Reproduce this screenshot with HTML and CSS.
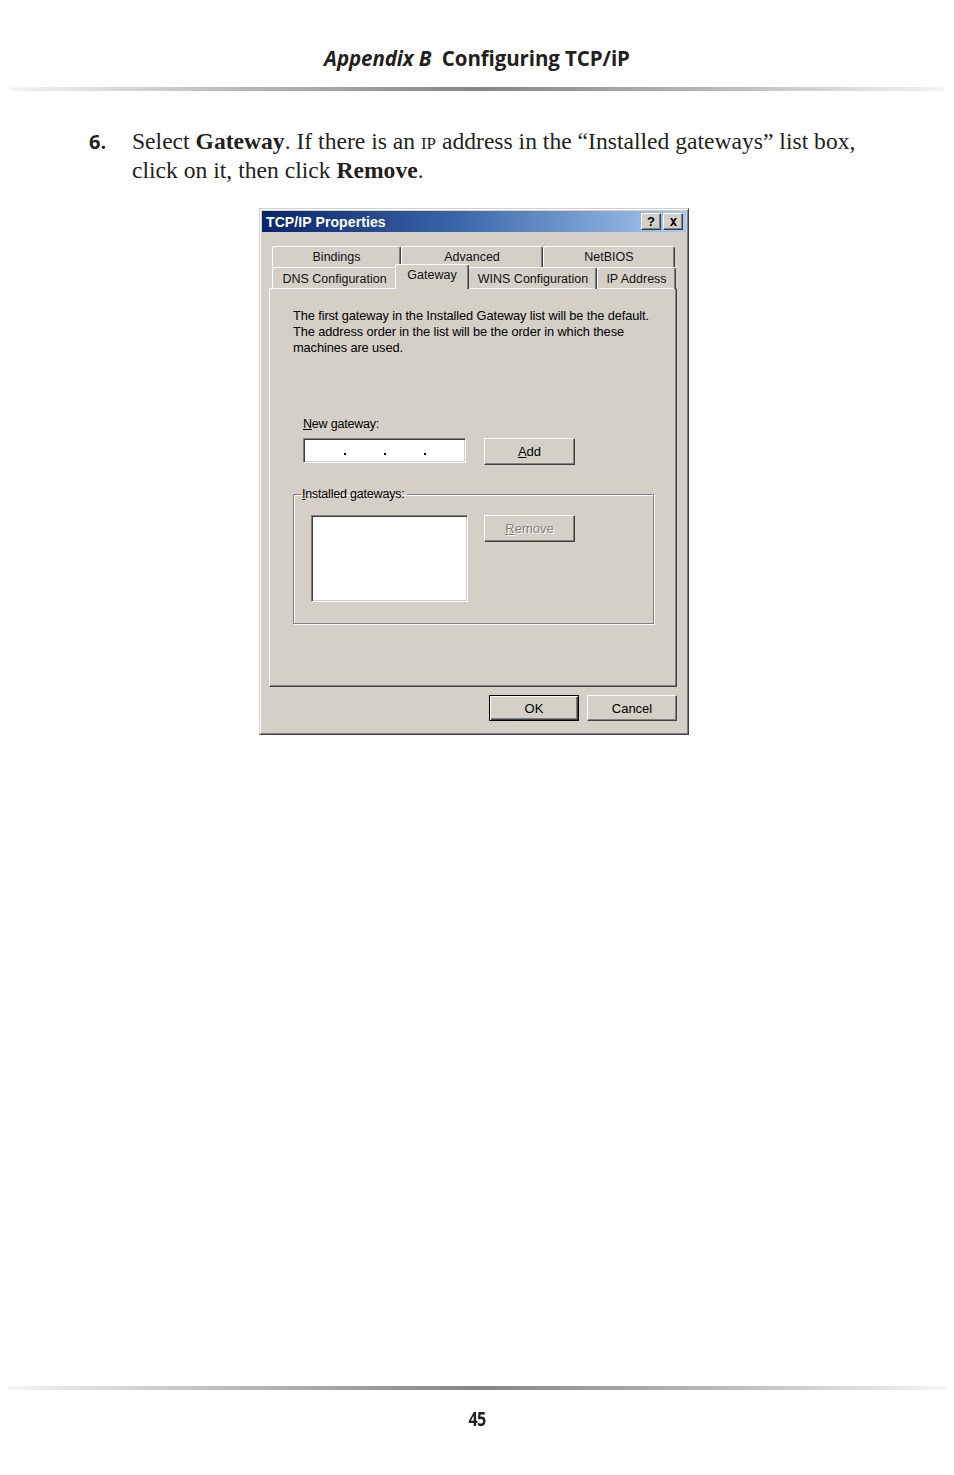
FILE: index.html
```html
<!DOCTYPE html>
<html>
<head>
<meta charset="utf-8">
<link rel="stylesheet" href="styles.css">
</head>
<body>
<div class="page">
  <header class="running-head">
    <div class="head-text"><em>Appendix B</em>&nbsp; Configuring TCP/iP</div>
    <div class="rule"></div>
  </header>

  <div class="step">
    <div class="step-num">6.</div>
    <p class="step-text">Select <b>Gateway</b>. If there is an <span class="sc">ip</span> address in the “Installed gateways” list box, click on it, then click <b>Remove</b>.</p>
  </div>

  <div class="dialog">
    <div class="titlebar">
      <span class="title">TCP/IP Properties</span>
      <div class="tb-buttons">
        <span class="tb-btn">?</span>
        <span class="tb-btn tb-close"><svg width="9" height="8" viewBox="0 0 9 8"><path d="M1 0h2l1.5 2.2L6 0h2L5.5 4 8 8H6L4.5 5.8 3 8H1l2.5-4z" fill="#000"/></svg></span>
      </div>
    </div>
    <div class="dlg-body">
      <div class="tabs">
        <div class="tab-row back">
          <div class="tab t-bind">Bindings</div>
          <div class="tab t-adv">Advanced</div>
          <div class="tab t-net">NetBIOS</div>
        </div>
        <div class="tab-row front">
          <div class="tab t-dns">DNS Configuration</div>
          <div class="tab t-gw selected">Gateway</div>
          <div class="tab t-wins">WINS Configuration</div>
          <div class="tab t-ip">IP Address</div>
        </div>
      </div>
      <div class="panel">
        <p class="desc">The first gateway in the Installed Gateway list will be the default.<br>The address order in the list will be the order in which these<br>machines are used.</p>
        <div class="new-gw">
          <div class="label"><u>N</u>ew gateway:</div>
          <div class="row">
            <div class="ipfield"><span class="dot"></span><span class="dot"></span><span class="dot"></span></div>
            <div class="btn btn-add"><u>A</u>dd</div>
          </div>
        </div>
        <fieldset class="group">
          <legend><u>I</u>nstalled gateways:</legend>
          <div class="group-row">
            <div class="listbox"></div>
            <div class="btn btn-remove disabled"><u>R</u>emove</div>
          </div>
        </fieldset>
      </div>
      <div class="dlg-buttons">
        <div class="btn btn-ok default">OK</div>
        <div class="btn btn-cancel">Cancel</div>
      </div>
    </div>
  </div>

  <footer class="running-foot">
    <div class="rule foot-rule"></div>
    <div class="page-num">45</div>
  </footer>
</div>
</body>
</html>
```
FILE: styles.css
```css
html, body { margin: 0; padding: 0; background: #fff; }
.page {
  width: 954px;
  min-height: 1475px;
  display: flex;
  flex-direction: column;
  color: #231f20;
}
.running-head { padding-top: 45px; }
.head-text {
  text-align: center;
  font-family: "Open Sans", "DejaVu Sans", sans-serif;
  font-weight: 700;
  font-size: 20.5px;
  line-height: 26px;
  letter-spacing: -0.1px;
}
.head-text em { font-style: italic; }
.rule {
  height: 4px;
  margin: 16px 10px 0;
  background: linear-gradient(to right, #f4f4f4 0%, #b8b8b8 25%, #858585 50%, #b8b8b8 75%, #f4f4f4 100%);
}

.step {
  display: flex;
  margin: 36px 0 0 89px;
}
.step-num {
  width: 43px;
  font-family: "Open Sans", "DejaVu Sans", sans-serif;
  font-weight: 700;
  font-size: 20px;
  line-height: 29px;
}
.step-text {
  margin: 0;
  width: 732px;
  font-family: "Liberation Serif", "DejaVu Serif", serif;
  font-size: 23.6px;
  line-height: 29px;
  color: #231f20;
}
.sc { font-variant: small-caps; }

/* Dialog */
.dialog {
  margin: 23px 0 0 259px;
  width: 430px;
  height: 527px;
  box-sizing: border-box;
  background: #d4d0c8;
  border: 1px solid;
  border-color: #d4d0c8 #404040 #404040 #d4d0c8;
  box-shadow: inset 1px 1px 0 #fff, inset -1px -1px 0 #808080;
  padding: 2px;
  font-family: "Liberation Sans", Arial, sans-serif;
  font-size: 12px;
  color: #000;
}
.titlebar {
  height: 21px;
  display: flex;
  align-items: center;
  justify-content: space-between;
  background: linear-gradient(to right, #0a246a 0%, #3a64a8 45%, #a6caf0 100%);
  padding: 0 3px 0 4px;
}
.title {
  color: #fff;
  font-weight: 700;
  font-size: 14px;
  letter-spacing: 0.1px;
}
.tb-buttons { display: flex; gap: 2px; }
.tb-btn {
  width: 20px;
  height: 17px;
  box-sizing: border-box;
  background: #d4d0c8;
  border: 1px solid;
  border-color: #fff #404040 #404040 #fff;
  box-shadow: inset -1px -1px 0 #808080;
  display: flex;
  align-items: center;
  justify-content: center;
  font-weight: 700;
  font-size: 13px;
  line-height: 1;
}
.dlg-body { padding: 0 9px 0 7px; }

.tabs { margin: 14px 0 0 3px; position: relative; z-index: 1; }
.tab-row { display: flex; height: 21px; }
.tab-row.front { height: 22px; }
.tab {
  box-sizing: border-box;
  height: 100%;
  border-top: 1px solid #fff;
  border-left: 1px solid #fff;
  border-right: 1px solid #404040;
  border-top-left-radius: 3px;
  border-top-right-radius: 3px;
  box-shadow: inset -1px 0 0 #808080;
  text-align: center;
  padding-top: 3px;
  white-space: nowrap;
  font-size: 12.5px;
  color: #111;
}
.tab-row.front .tab { padding-top: 4px; }
.t-bind { width: 129px; }
.t-adv { width: 142px; }
.t-net { width: 132px; }
.t-dns { width: 125px; }
.t-gw { width: 70px; }
.t-wins { width: 130px; }
.t-ip { width: 79px; }
.tab-row.front .tab.selected {
  height: 25px;
  margin: -3px -2px 0;
  width: 74px;
  background: #d4d0c8;
  padding-top: 3px;
  position: relative;
  z-index: 2;
}
.tab-row.front .t-wins { padding-left: 2px; }

.panel {
  margin-top: -1px;
  height: 399px;
  box-sizing: border-box;
  border: 1px solid;
  border-color: #fff #404040 #404040 #fff;
  box-shadow: inset -1px -1px 0 #808080;
  position: relative;
}
.desc {
  margin: 0;
  padding: 19px 0 0 23px;
  font-size: 12.8px;
  line-height: 16px;
  letter-spacing: -0.1px;
}
.new-gw { margin: 60px 0 0 33px; }
.label { line-height: 16px; font-size: 12.5px; letter-spacing: -0.2px; }
.row { display: flex; align-items: flex-start; margin-top: 6px; gap: 18px; }
.ipfield {
  width: 163px;
  height: 25px;
  box-sizing: border-box;
  background: #fff;
  border: 1px solid;
  border-color: #808080 #fff #fff #808080;
  box-shadow: inset 1px 1px 0 #404040, inset -1px -1px 0 #d4d0c8;
  display: flex;
  justify-content: center;
  align-items: flex-end;
  gap: 38px;
  padding: 0 0 7px 0;
}
.dot { width: 2px; height: 2px; background: #000; }

.btn {
  box-sizing: border-box;
  width: 91px;
  height: 27px;
  background: #d4d0c8;
  border: 1px solid;
  border-color: #fff #404040 #404040 #fff;
  box-shadow: inset -1px -1px 0 #808080;
  display: flex;
  align-items: center;
  justify-content: center;
  font-size: 13px;
}
.btn.disabled {
  color: #808080;
  text-shadow: 1px 1px 0 #fff;
}
.group {
  margin: 22px 0 0 23px;
  width: 361px;
  height: 137px;
  box-sizing: border-box;
  padding: 0;
  border: 1px solid #808080;
  box-shadow: inset 1px 1px 0 #fff, 1px 1px 0 #fff;
  min-width: 0;
}
.group legend {
  margin-left: 7px;
  padding: 0 2px 0 1px;
  line-height: 14px;
  font-size: 12.5px;
  letter-spacing: -0.2px;
}
.group-row { display: flex; gap: 16px; margin: 7px 0 0 17px; align-items: flex-start; }
.listbox {
  margin-top: 7px;
  width: 157px;
  height: 87px;
  box-sizing: border-box;
  background: #fff;
  border: 1px solid;
  border-color: #808080 #fff #fff #808080;
  box-shadow: inset 1px 1px 0 #404040, inset -1px -1px 0 #d4d0c8;
}
.btn-remove { margin-top: 7px; }
.dlg-buttons {
  display: flex;
  justify-content: flex-end;
  gap: 8px;
  margin-top: 8px;
}
.btn-ok, .btn-cancel { width: 90px; height: 26px; }
.btn.default {
  border: 1px solid #000;
  box-shadow: inset 1px 1px 0 #fff, inset -1px -1px 0 #404040, inset -2px -2px 0 #808080;
}

.running-foot { margin-top: auto; padding-bottom: 44px; }
.foot-rule { margin: 0 8px; }
.page-num {
  margin-top: 17px;
  text-align: center;
  font-family: "Open Sans", "DejaVu Sans", sans-serif;
  font-weight: 700;
  font-size: 19px;
  line-height: 24px;
  letter-spacing: -1px;
  transform: scaleX(0.85);
}
```
